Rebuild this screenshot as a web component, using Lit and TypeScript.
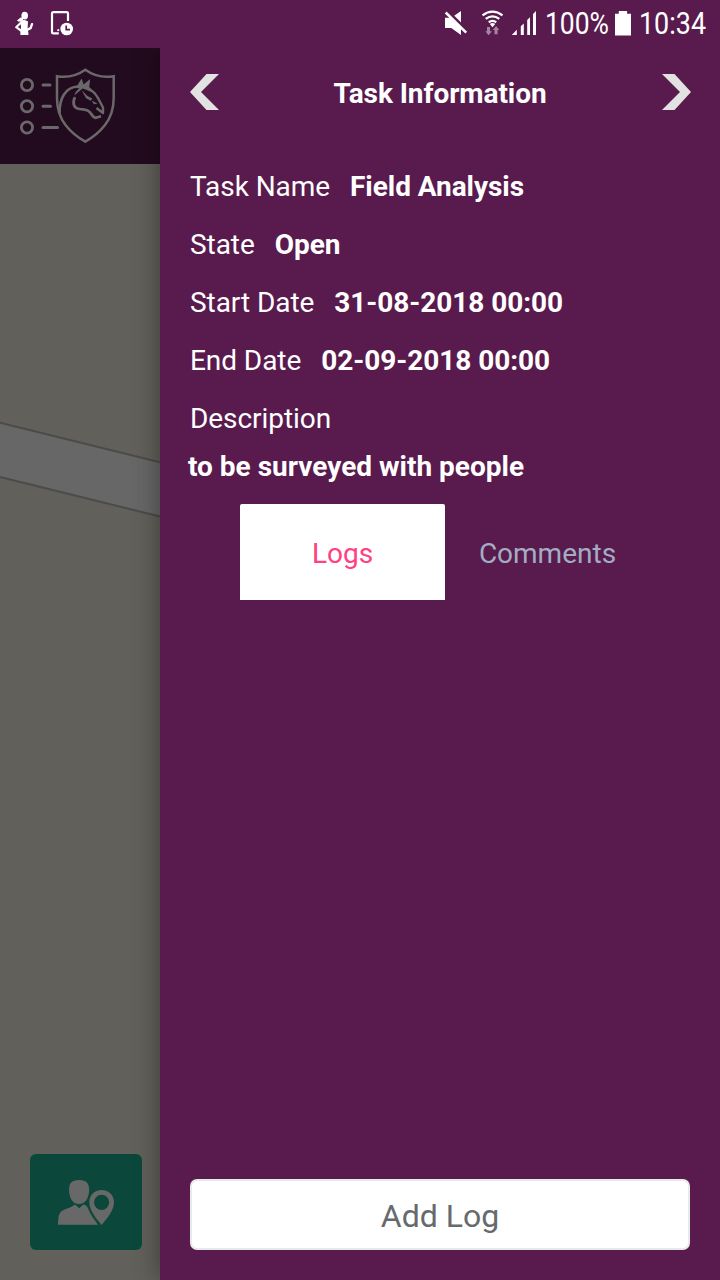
import { LitElement, html, css, svg } from "lit";
import { customElement, property, state } from "lit/decorators.js";

@customElement("status-bar")
class StatusBar extends LitElement {
  static styles = css`
    :host { display: block; height: 48px; background: #591b4d; }
    svg { display: block; }
    text { font-family: Roboto, sans-serif; font-size: 31px; fill: #fff; }
  `;
  render() {
    return html`
      <svg width="720" height="48" viewBox="0 0 720 48" fill="#fff">
        <ellipse cx="24.7" cy="15.6" rx="3.3" ry="3.9" />
        <path d="M17 20.4L20.6 17.4L23 17.6V20.4L20.6 21.2L18.8 21.8Z" />
        <path d="M20.3 21.2Q24.6 18.6 28 21.6L27.6 28.4L28.4 33V35H20.4V31.5L21 27Z" />
        <g fill="none" stroke="#fff" stroke-linecap="round" stroke-linejoin="round">
          <path d="M20.8 22.8L16.2 27.2L21 30.6" stroke-width="2.2" />
          <path d="M27 29.8L30.6 28.2L32 24.2" stroke-width="2.4" />
        </g>
        <path d="M68 21V13.6Q68 12.2 66.6 12.2H53.4Q52 12.2 52 13.6V32Q52 33.4 53.4 33.4H58.8" fill="none" stroke="#fff" stroke-width="2.2" />
        <rect x="57.3" y="29.2" width="1.9" height="1.9" />
        <circle cx="66.7" cy="29" r="6.3" />
        <path d="M66.2 25.5V29.7H70" fill="none" stroke="#591b4d" stroke-width="1.7" />

        <path d="M445 17.7H451.3L461 11V35L451.3 28H445Z" />
        <path d="M446.6 10.4L469 32.2" stroke="#591b4d" stroke-width="3" />
        <path d="M445.7 12.5L466.2 32.6" stroke="#fff" stroke-width="2.5" />

        <g fill="none" stroke="#fff" stroke-width="2.3">
          <path d="M482.5 15.3Q492.5 7.9 502.5 15.3" />
          <path d="M485.7 18.9Q492.5 13.9 499.3 18.9" />
          <path d="M488.8 22.2Q492.5 19.6 496.2 22.2" />
        </g>
        <path d="M489.8 24Q492.5 22 495.2 24L492.5 27.2Z" />
        <g fill="#a383a0">
          <path d="M487 27H490V31.3H492L488.5 35.3L485.4 31.3H487Z" />
          <path d="M494.5 34.3V30H492.8L496.1 26L499.3 30H497.6V34.3Z" />
        </g>
        <path d="M511.8 35L516.8 29.8V35ZM520.8 26.3L523.8 23.5V35H520.8ZM527.2 20L530 17.3V35H527.2ZM533 14L536 11V35H533Z" />
        <text x="545" y="34.3" textLength="64" lengthAdjust="spacingAndGlyphs">100%</text>
        <path d="M615 13.7H618.8V11H627.1V13.7H631V35.5H615Z" />
        <text x="639" y="34.3" textLength="67" lengthAdjust="spacingAndGlyphs">10:34</text>
      </svg>
    `;
  }
}

@customElement("map-strip")
class MapStrip extends LitElement {
  static styles = css`
    :host { display: flex; flex-direction: column; background: #62605a; }
    header { height: 116px; background: #230b1f; }
    svg { display: block; }
    .map { flex: 1; display: flex; flex-direction: column; justify-content: space-between; }
    .locate {
      width: 112px; height: 96px; margin: 0 0 30px 30px; padding: 0; border: 0;
      border-radius: 6px; background: #0b483b;
    }
  `;
  render() {
    return html`
      <header>
        <svg width="160" height="116" viewBox="0 48 160 116" fill="none" stroke="#6b686a">
          ${[85, 106.3, 127.5].map((y) => svg`<circle cx="27" cy=${y} r="5.6" stroke-width="2.8" />`)}
          <path d="M43 85H50M43 106.2H50.5M43 127.4H57.5" stroke-width="3" stroke-linecap="round" />
          <path d="M57 76.2Q72.5 78.8 85.3 69.7Q98 78.8 113.7 76.2V98C113.7 110 110.8 117.5 105 125Q97.5 134.7 85.3 141.7Q73 134.7 65.5 125C59.5 117.3 57 109 57 98Z" stroke-width="2.5" />
          <path d="M59.6 113C59.3 99 65 87 78 86.5" stroke-width="2.6" />
          <g fill="#6b686a" stroke="none">
            <path d="M76 88L78.6 83.2L81.6 78.6L83.6 84.6L90.2 79L89.2 87L93.5 91.5L91.8 92.3L86.8 90L82.5 88.6L74.3 95.6Q75.3 91.4 79.2 88.2Z" />
            <path d="M81.5 90L87.5 96L92.3 98.6L90.8 100.8L86 98.2Z" />
            <path d="M91.5 100.5L97.5 103.6L94 104.2Z" />
          </g>
          <path d="M89 89C94.5 91.2 96.5 95.5 98.8 99.5L103 107.5V113L96.5 108" stroke-width="2.4" stroke-linejoin="round" />
          <path d="M75 97.2C72 103 73.6 108.2 79.5 109C84 109.6 86 108.8 88.8 111.2C92 114 92.8 117.8 95.8 117.8L101 116.3" stroke-width="2.7" stroke-linejoin="round" />
        </svg>
      </header>
      <div class="map">
        <svg width="160" height="400" viewBox="0 164 160 400">
          <path d="M0 422.8L160 462.2V516.5L0 477Z" fill="#676767" />
          <path d="M0 422.8L160 462.2M0 477L160 516.5" stroke="#4b4b49" stroke-width="2" />
        </svg>
        <button class="locate" aria-label="Locate person">
          <svg width="112" height="96" viewBox="30 1154 112 96" fill="#686868">
            <path d="M79 1180C86.5 1180 89.3 1183.5 89.1 1190C89 1198 85.4 1204 79 1204C72.6 1204 69.2 1198 69.1 1190C68.9 1183.5 71.6 1180 79 1180Z" />
            <path d="M75 1204.6L79.2 1208.2L83.4 1204.6Q86.8 1205.1 88.3 1209C90.8 1215 94 1219.3 98 1224.8H58C58.2 1218.7 58.4 1212.5 62.5 1210.5C67 1208.4 72 1207.4 75 1204.6Z" />
            <path fill-rule="evenodd" d="M101.6 1190C94.5 1190 89.3 1195.4 89.3 1202.1C89.3 1209.8 95 1217.5 101.6 1225C108.2 1217.5 114 1209.8 114 1202.1C114 1195.4 108.7 1190 101.6 1190ZM101.6 1194.7A7.6 7.6 0 1 1 101.6 1209.9A7.6 7.6 0 1 1 101.6 1194.7Z" />
          </svg>
        </button>
      </div>
    `;
  }
}

@customElement("task-field")
class TaskField extends LitElement {
  @property() label = "";
  @property() value = "";
  static styles = css`
    :host { display: flex; gap: 20px; height: 58px; line-height: 58px; white-space: nowrap; letter-spacing: -0.06px; }
    strong { font-weight: 700; }
  `;
  render() {
    return html`<span>${this.label}</span>${this.value ? html`<strong>${this.value}</strong>` : ""}`;
  }
}

@customElement("task-drawer")
class TaskDrawer extends LitElement {
  @state() tab = "Logs";
  fields = [
    ["Task Name", "Field Analysis"],
    ["State", "Open"],
    ["Start Date", "31-08-2018 00:00"],
    ["End Date", "02-09-2018 00:00"],
    ["Description", ""],
  ];
  static styles = css`
    :host {
      display: flex; flex-direction: column; box-sizing: border-box; padding: 0 30px 30px;
      background: #591b4d; color: #fff; font: 28px Roboto, sans-serif;
      box-shadow: 0 0 25px rgba(0, 0, 0, 0.4);
    }
    header { display: flex; justify-content: space-between; align-items: center; height: 90px; margin-right: -1px; }
    h1 { margin: 0 0 0 -1px; font-size: 28px; font-weight: 700; letter-spacing: -0.07px; }
    svg { display: block; fill: #e2e2e2; margin-bottom: 2px; }
    .fields { padding-top: 20px; }
    .description { margin: -5px 0 0 -2px; height: 48px; line-height: 48px; font-weight: 700; }
    .tabs { display: flex; margin: 13px 0 0 50px; }
    .tab {
      width: 205px; height: 96px; padding: 3px 0 0; border: 0; border-radius: 2px 2px 0 0;
      background: none; color: #a3adc2; font: inherit;
    }
    .tab.active { background: #fff; color: #ff4081; }
    .add {
      height: 71px; margin-top: auto; padding: 3px 0 0; border: 2px solid #e7e9ed; border-radius: 7px;
      background: #fff; color: #666a6d; font: 32px Roboto, sans-serif;
    }
  `;
  render() {
    return html`
      <header>
        <svg width="29" height="36" viewBox="0 0 29 36"><path d="M16.5 0H29L11 18L29 36H16.5L0 18Z" /></svg>
        <h1>Task Information</h1>
        <svg width="29" height="36" viewBox="0 0 29 36"><path d="M0 0H12.5L29 18L12.5 36H0L18 18Z" /></svg>
      </header>
      <div class="fields">
        ${this.fields.map(([l, v]) => html`<task-field .label=${l} .value=${v}></task-field>`)}
      </div>
      <div class="description">to be surveyed with people</div>
      <div class="tabs">
        ${["Logs", "Comments"].map(
          (t) => html`<button class="tab ${t === this.tab ? "active" : ""}" @click=${() => (this.tab = t)}>${t}</button>`
        )}
      </div>
      <button class="add">Add Log</button>
    `;
  }
}

@customElement("app-root")
class AppRoot extends LitElement {
  static styles = css`
    :host { display: flex; flex-direction: column; width: 720px; height: 1280px; overflow: hidden; }
    main { flex: 1; display: grid; grid-template-columns: 160px 560px; overflow: hidden; }
  `;
  render() {
    return html`
      <status-bar></status-bar>
      <main><map-strip></map-strip><task-drawer></task-drawer></main>
    `;
  }
}
